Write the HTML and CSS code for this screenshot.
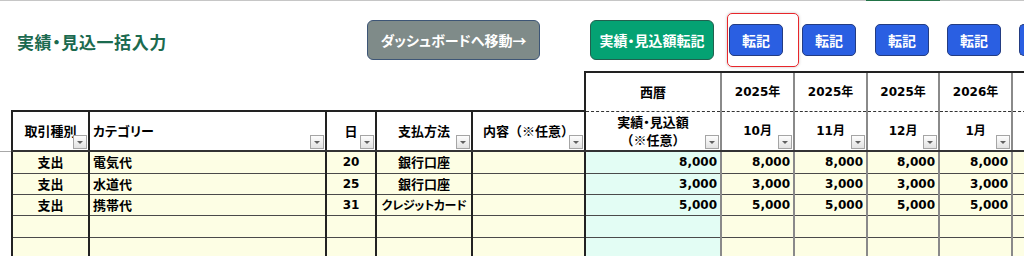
FILE: index.html
```html
<!DOCTYPE html>
<html lang="ja">
<head>
  <meta charset="UTF-8">
  <meta name="viewport" content="width=device-width, initial-scale=1.0">
  <title>実績・見込一括入力</title>
  <link rel="stylesheet" href="styles.css">
</head>
<body>
  <div class="topline"><span class="topline-sel"></span></div>

  <div class="toolbar">
    <h1 class="title">実績・見込一括入力</h1>
    <button class="btn btn-gray">ダッシュボードへ移動→</button>
    <button class="btn btn-green">実績・見込額転記</button>
    <button class="btn btn-blue is-marked">転記</button>
    <button class="btn btn-blue">転記</button>
    <button class="btn btn-blue">転記</button>
    <button class="btn btn-blue">転記</button>
    <button class="btn btn-blue btn-edge" aria-label="転記"></button>
  </div>

  <table class="sheet">
    <colgroup>
      <col style="width: 12px">
      <col style="width: 77px">
      <col style="width: 237px">
      <col style="width: 50px">
      <col style="width: 96px">
      <col style="width: 113px">
      <col style="width: 136px">
      <col style="width: 73px">
      <col style="width: 73px">
      <col style="width: 72px">
      <col style="width: 73px">
      <col style="width: 100px">
    </colgroup>
    <thead>
      <tr class="row-year">
        <td class="blank" colspan="6"></td>
        <th class="amt">西暦</th>
        <th class="m num">2025年</th>
        <th class="m num">2025年</th>
        <th class="m num">2025年</th>
        <th class="m num">2026年</th>
        <th class="m"></th>
      </tr>
      <tr class="row-head">
        <td class="gutter"></td>
        <th class="lt">取引種別<span class="f"></span></th>
        <th class="lt l">カテゴリー<span class="f"></span></th>
        <th class="lt">日<span class="f"></span></th>
        <th class="lt">支払方法<span class="f"></span></th>
        <th class="lt"><span class="wide">内容（※任意）</span><span class="f"></span></th>
        <th class="amt">実績・見込額<br><span class="wide">（※任意）</span><span class="f"></span></th>
        <th class="m num">10月<span class="f"></span></th>
        <th class="m num">11月<span class="f"></span></th>
        <th class="m num">12月<span class="f"></span></th>
        <th class="m num">1月<span class="f"></span></th>
        <th class="m"></th>
      </tr>
    </thead>
    <tbody>
      <tr class="r22">
        <td class="gutter"></td>
        <td class="c">支出</td>
        <td class="l">電気代</td>
        <td class="c num">20</td>
        <td class="c">銀行口座</td>
        <td></td>
        <td class="amt r num">8,000</td>
        <td class="m r num">8,000</td>
        <td class="m r num">8,000</td>
        <td class="m r num">8,000</td>
        <td class="m r num">8,000</td>
        <td class="m"></td>
      </tr>
      <tr class="r21">
        <td class="gutter"></td>
        <td class="c">支出</td>
        <td class="l">水道代</td>
        <td class="c num">25</td>
        <td class="c">銀行口座</td>
        <td></td>
        <td class="amt r num">3,000</td>
        <td class="m r num">3,000</td>
        <td class="m r num">3,000</td>
        <td class="m r num">3,000</td>
        <td class="m r num">3,000</td>
        <td class="m"></td>
      </tr>
      <tr class="r21">
        <td class="gutter"></td>
        <td class="c">支出</td>
        <td class="l">携帯代</td>
        <td class="c num">31</td>
        <td class="c tight">クレジットカード</td>
        <td></td>
        <td class="amt r num">5,000</td>
        <td class="m r num">5,000</td>
        <td class="m r num">5,000</td>
        <td class="m r num">5,000</td>
        <td class="m r num">5,000</td>
        <td class="m"></td>
      </tr>
      <tr class="r22">
        <td class="gutter"></td>
        <td></td><td></td><td></td><td></td><td></td>
        <td class="amt"></td>
        <td class="m"></td><td class="m"></td><td class="m"></td><td class="m"></td><td class="m"></td>
      </tr>
      <tr class="r22">
        <td class="gutter"></td>
        <td></td><td></td><td></td><td></td><td></td>
        <td class="amt"></td>
        <td class="m"></td><td class="m"></td><td class="m"></td><td class="m"></td><td class="m"></td>
      </tr>
    </tbody>
  </table>
</body>
</html>
```

FILE: styles.css
```css
body {
  margin: 0;
  overflow: hidden;
  background: #fff;
  color: #000;
  font-family: "Noto Sans CJK JP", sans-serif;
  font-feature-settings: "palt";
}

.topline {
  display: flex;
  height: 1px;
  background: #c6c6c6;
}

.topline-sel {
  margin-left: 866px;
  width: 74px;
  background: #217346;
}

.toolbar {
  display: grid;
  grid-template-columns: 12px 77px 237px 50px 96px 113px 136px 73px 73px 72px 73px 1fr;
  align-items: center;
  height: 62px;
  padding-top: 8px;
}

.title {
  grid-column: 2 / 4;
  margin: 3px 0 0 5px;
  font-size: 17px;
  font-weight: 700;
  color: #1b6a4f;
  letter-spacing: 0.6px;
}

.btn {
  justify-self: start;
  font-family: "Noto Sans CJK JP", sans-serif;
  font-feature-settings: "palt";
  font-weight: 700;
  color: #fff;
  border-radius: 6px;
  padding: 0;
  cursor: pointer;
  white-space: nowrap;
  overflow: hidden;
}

.btn-gray {
  grid-column: 4 / 7;
  margin-left: 41px;
  width: 173px;
  height: 40px;
  font-size: 14px;
  background: #7f8b89;
  border: 1px solid #3d5576;
}

.btn-green {
  grid-column: 7;
  margin-left: 5px;
  width: 124px;
  height: 40px;
  font-size: 14px;
  background: #04a273;
  border: 1px solid #22604f;
}

.btn-blue {
  position: relative;
  margin-left: 8px;
  width: 54px;
  height: 32px;
  font-size: 14px;
  background: #2a5fe2;
  border: 1px solid #233c82;
  border-radius: 5px;
  overflow: visible;
}

.btn-edge {
  margin-left: 7px;
  width: 5px;
  border-right: none;
  border-radius: 5px 0 0 5px;
}

.btn-blue.is-marked::after {
  content: "";
  position: absolute;
  top: -12px;
  bottom: -12px;
  left: -3px;
  right: -17px;
  border: 1.5px solid #e8262b;
  border-radius: 5px;
  box-shadow: 0 0 3px rgba(0, 0, 0, 0.25);
}

/* sheet */
.sheet {
  border-collapse: collapse;
  table-layout: fixed;
  width: 1112px;
}

.sheet th,
.sheet td {
  position: relative;
  padding: 0 3px;
  font-size: 13px;
  font-weight: 700;
  line-height: 18px;
  white-space: nowrap;
  overflow: hidden;
  text-align: center;
  vertical-align: middle;
}

.row-year {
  height: 39px;
}

.row-head {
  height: 40px;
}

.r22 {
  height: 22px;
}

.r21 {
  height: 21px;
}

.row-year th {
  background: #fff;
  border-top: 2px solid #222;
  border-left: 2px solid #222;
  border-bottom: 1px dashed #333;
}

.row-head th {
  background: #fff;
  border-left: 2px solid #222;
  border-bottom: 2px solid #333;
}

.row-head th.lt {
  border-top: 2px solid #222;
}

.wide {
  font-feature-settings: normal;
}

.sheet .tight {
  padding: 0;
  font-size: 12px;
  letter-spacing: -0.3px;
}

.sheet td.blank {
  border: none;
}

.sheet td.gutter {
  border: none;
  background: #fff;
}

.row-head td.gutter {
  border-bottom: 1px solid #a8a8a8;
}

tbody td {
  background: #fdfee4;
  border-left: 2px solid #222;
  border-bottom: 1px solid #4a4a4a;
}

tbody td.amt {
  background: #e3fdf4;
}

.sheet .m {
  border-left: 2px solid #8a8a8a;
}

.sheet .l {
  text-align: left;
}

.sheet .r {
  text-align: right;
}

.sheet .num {
  font-family: "DejaVu Sans", "Noto Sans CJK JP", sans-serif;
  font-size: 12px;
}

.f {
  position: absolute;
  right: 1px;
  bottom: 1px;
  width: 14px;
  height: 14px;
  box-sizing: border-box;
  border: 1px solid #a5a5a5;
  background: linear-gradient(#fdfdfd, #e2e2e2);
}

.f::after {
  content: "";
  position: absolute;
  left: 3px;
  top: 5px;
  border-left: 3px solid transparent;
  border-right: 3px solid transparent;
  border-top: 3px solid #606060;
}
```
